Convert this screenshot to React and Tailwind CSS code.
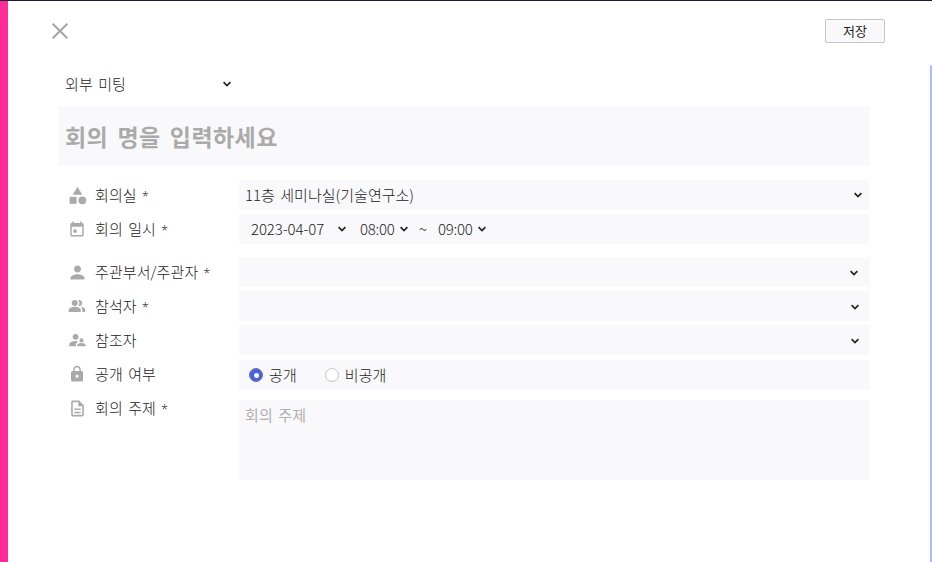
import React from 'react';
import { MdCategory, MdLock, MdOutlineDescription, MdPeopleAlt, MdPerson } from 'react-icons/md';

const Chevron = ({ className = '' }) => (
    <svg className={`w-2 h-[6px] shrink-0 ${className}`} viewBox="0 0 8 6" fill="none" stroke="#222" strokeWidth="1.7">
        <path d="M0.6 1.2 4 4.5 7.4 1.2" />
    </svg>
);

const CalendarIcon = ({ className = '' }) => (
    <svg className={className} viewBox="0 0 24 24" fill="currentColor">
        <path d="M19 4h-1V2h-2v2H8V2H6v2H5c-1.11 0-2 .9-2 2v14c0 1.1.89 2 2 2h14c1.1 0 2-.9 2-2V6c0-1.1-.9-2-2-2zm0 16H5V9h14v11z" />
        <circle cx="9.3" cy="14.8" r="2.5" />
    </svg>
);

// Large person with a smaller one in front, lower right
const ReferrerIcon = ({ className = '' }) => (
    <svg className={className} viewBox="0 0 17 14" fill="currentColor">
        <circle cx="6.6" cy="3.8" r="2.9" />
        <path d="M0.2 13.2v-1.7C0.2 9.4 3.6 8.1 6.6 8.1c.8 0 1.6.1 2.4.3C7.7 9.3 7 10.6 7 12v1.2z" />
        <circle cx="12.5" cy="7.4" r="2.1" />
        <path d="M8.3 13.2v-.9c0-1.5 2.3-2.2 4.2-2.2s4.2.7 4.2 2.2v.9z" />
    </svg>
);

const Row = ({ icon: Icon, iconClass = 'w-[18px] h-[18px]', label, required, className = '', children }) => (
    <div className={`flex items-start ${className}`}>
        <div className="flex items-center w-[180px] h-[30px] pl-[7px] shrink-0">
            <span className="flex items-center justify-center w-[22px] shrink-0 text-[#aaa]">
                <Icon className={`shrink-0 ${iconClass}`} />
            </span>
            <span className="ml-[7px]">{label}</span>
            {required && <span className="ml-[5px] pt-[2px] font-['Open_Sans',sans-serif] text-[13px]">*</span>}
        </div>
        {children}
    </div>
);

const Field = ({ className = '', children }) => (
    <div className={`flex items-center w-[631px] h-[30px] bg-[#f9f9fb] ${className}`}>{children}</div>
);

const Radio = ({ label, checked, className = '' }) => (
    <label className={`flex items-center ${className}`}>
        {checked ? (
            <span className="flex items-center justify-center w-[14px] h-[14px] rounded-full bg-[#4262ee] border border-[#777]">
                <span className="w-[5px] h-[5px] rounded-full bg-white" />
            </span>
        ) : (
            <span className="w-[14px] h-[14px] rounded-full bg-white border border-[#c4c4c4]" />
        )}
        <span className="ml-[6px]">{label}</span>
    </label>
);

const App = () => {
    return (
        <div className="flex w-[932px] h-[562px] overflow-hidden bg-white border-t border-[#1a1a33] font-['Noto_Sans_CJK_KR',sans-serif] font-light text-[15px] leading-[22px] tracking-[0.1px] [word-spacing:2px] text-[#222] whitespace-nowrap">
            <div className="w-2 bg-[#ff2e97] shrink-0" />

            <main className="w-[922px] pl-[51px]">
                {/* Close / save */}
                <header className="flex items-start justify-between -ml-[7px] w-[833px] pt-[18px] h-[68px]">
                    <svg className="w-4 h-4 mt-[4px]" viewBox="0 0 16 16" fill="none" stroke="#a5a5a5" strokeWidth="2">
                        <path d="M0.7 0.7 15.3 15.3M15.3 0.7 0.7 15.3" />
                    </svg>
                    <button className="w-[60px] h-6 rounded-[2px] border border-[#c4c4c4] bg-[#f9f9fb] text-[13px] leading-[22px] font-normal tracking-normal">
                        저장
                    </button>
                </header>

                <div className="flex items-center justify-between w-[172px] h-[30px] pl-[6px]">
                    <span>외부 미팅</span>
                    <Chevron />
                </div>

                <div className="flex items-center w-[811px] h-[60px] mt-[7px] pl-[6px] bg-[#f9f9fb] text-[23px] leading-[34px] tracking-[0.45px] [word-spacing:3.5px] font-bold text-[#aaa]">
                    회의 명을 입력하세요
                </div>

                <Row icon={MdCategory} iconClass="w-[21px] h-[21px]" label="회의실" required className="mt-[14px]">
                    <Field className="justify-between pl-[6px] pr-2">
                        <span className="tracking-[0.02px]">11층 세미나실(기술연구소)</span>
                        <Chevron />
                    </Field>
                </Row>
                <Row icon={CalendarIcon} label="회의 일시" required className="mt-1">
                    <Field className="pl-3 tracking-normal">
                        <span className="w-[87px] tracking-[-0.1px]">2023-04-07</span>
                        <Chevron />
                        <span className="ml-[14px] w-[40px] tracking-[-0.3px]">08:00</span>
                        <Chevron />
                        <span className="ml-[11px] w-[19px]">~</span>
                        <span className="w-[40px] tracking-[-0.3px]">09:00</span>
                        <Chevron />
                    </Field>
                </Row>

                <Row icon={MdPerson} iconClass="w-[21px] h-[21px]" label="주관부서/주관자" required className="mt-[13px]">
                    <Field className="justify-end pr-3">
                        <Chevron className="mt-px" />
                    </Field>
                </Row>
                <Row icon={MdPeopleAlt} label="참석자" required className="mt-1">
                    <Field className="justify-end pr-[11px]">
                        <Chevron className="mt-[2px]" />
                    </Field>
                </Row>
                <Row icon={ReferrerIcon} iconClass="w-[17px] h-[14px]" label="참조자" className="mt-1">
                    <Field className="justify-end pr-[11px]">
                        <Chevron className="mt-[2px]" />
                    </Field>
                </Row>
                <Row icon={MdLock} label="공개 여부" className="mt-1">
                    <Field className="mt-px pl-[10px]">
                        <Radio label="공개" checked />
                        <Radio label="비공개" className="ml-[28px]" />
                    </Field>
                </Row>
                <Row icon={MdOutlineDescription} iconClass="w-[19px] h-[19px]" label="회의 주제" required className="mt-[3px]">
                    <div className="w-[631px] h-20 mt-[7px] px-[6px] py-1 bg-[#f9f9fb] font-normal text-[#b0b0b0]">회의 주제</div>
                </Row>
            </main>

            {/* Scrollbar thumb */}
            <div className="w-0.5 h-[497px] mt-16 rounded-tl-[2px] bg-[#a8b8ff] shrink-0" />
        </div>
    );
};

export default App;
